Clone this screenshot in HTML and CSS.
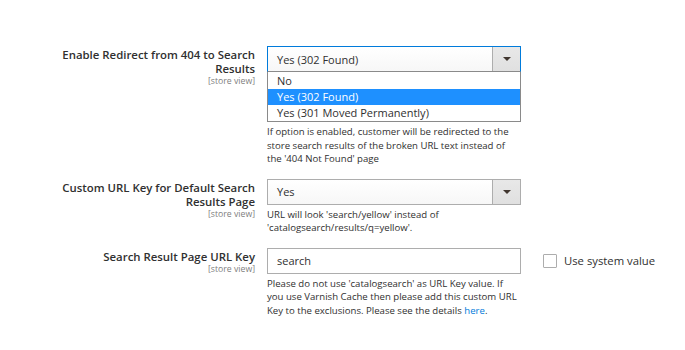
FILE: index.html
```html
<!DOCTYPE html>
<html lang="en">
<head>
    <meta charset="UTF-8">
    <title>Search Engine Optimization</title>
    <link rel="stylesheet" href="styles.css">
</head>
<body>
    <div class="fieldset">
        <div class="row">
            <div class="label">
                <span>Enable Redirect from 404 to Search Results</span>
                <span class="scope">[store view]</span>
            </div>
            <div class="control">
                <div class="select focused">
                    <span class="value">Yes (302 Found)</span>
                    <span class="arrow"></span>
                </div>
                <ul class="options">
                    <li>No</li>
                    <li class="active">Yes (302 Found)</li>
                    <li>Yes (301 Moved Permanently)</li>
                </ul>
                <p class="note">If option is enabled, customer will be redirected to the<br>store search results of the broken URL text instead of<br>the '404 Not Found' page</p>
            </div>
            <div class="extra"></div>
        </div>

        <div class="row">
            <div class="label">
                <span>Custom URL Key for Default Search Results Page</span>
                <span class="scope">[store view]</span>
            </div>
            <div class="control">
                <div class="select">
                    <span class="value">Yes</span>
                    <span class="arrow"></span>
                </div>
                <p class="note">URL will look 'search/yellow' instead of<br>'catalogsearch/results/q=yellow'.</p>
            </div>
            <div class="extra"></div>
        </div>

        <div class="row">
            <div class="label">
                <span>Search Result Page URL Key</span>
                <span class="scope">[store view]</span>
            </div>
            <div class="control">
                <input type="text" class="text" value="search">
                <p class="note">Please do not use 'catalogsearch' as URL Key value. If<br>you use Varnish Cache then please add this custom URL<br>Key to the exclusions. Please see the details <a href="#">here</a>.</p>
            </div>
            <div class="extra">
                <label class="check"><span class="box"></span>Use system value</label>
            </div>
        </div>
    </div>
</body>
</html>
```

FILE: styles.css
```css
body {
    margin: 0;
    background: #fff;
    font-family: 'Open Sans', sans-serif;
    color: #303030;
}

.fieldset {
    padding-top: 46px;
}

.row {
    display: grid;
    grid-template-columns: 255px 254px auto;
    column-gap: 12px;
    margin-bottom: 13px;
}

.label {
    box-sizing: border-box;
    padding: 2px 0 0 58px;
    text-align: right;
    font-size: 11.4px;
    font-weight: 600;
    line-height: 14px;
}

.label .scope {
    display: block;
    font-size: 8.7px;
    font-weight: 400;
    line-height: 11px;
    color: #808080;
}

.select {
    display: flex;
    align-items: center;
    height: 24px;
    border: 1px solid #adadad;
    background: linear-gradient(#fff, #f7f7f7);
}

.select.focused {
    border-color: #007bdb;
    border-bottom-color: #8a8a8a;
}

.select .value {
    flex: 1;
    padding-left: 9px;
    font-size: 11px;
}

.select .arrow {
    width: 27px;
    height: 100%;
    border-left: 1px solid #adadad;
    background: linear-gradient(#e8e8e8, #e0e0e0);
    display: flex;
    align-items: center;
    justify-content: center;
}

.select .arrow::after {
    content: "";
    border-left: 4px solid transparent;
    border-right: 4px solid transparent;
    border-top: 4px solid #41362f;
}

.options {
    list-style: none;
    margin: 0;
    padding: 1px 0 0;
    border: 1px solid #8a8a8a;
    border-top: none;
}

.options li {
    height: 16px;
    line-height: 16px;
    padding-left: 9px;
    font-size: 11px;
}

.options li.active {
    background: #1e90ff;
    color: #fff;
}

.note {
    margin: 3px 0 0;
    font-size: 9.6px;
    line-height: 13.5px;
    white-space: nowrap;
}

.note a {
    color: #007bdb;
    text-decoration: none;
}

.text {
    display: block;
    box-sizing: border-box;
    width: 100%;
    height: 26px;
    margin: 0;
    padding: 0 9px;
    border: 1px solid #adadad;
    border-radius: 0;
    font-family: 'Open Sans', sans-serif;
    font-size: 11px;
    color: #303030;
}

.extra {
    padding-left: 10px;
}

.check {
    display: flex;
    align-items: center;
    gap: 7px;
    height: 26px;
    font-size: 11.3px;
}

.check .box {
    width: 12px;
    height: 12px;
    border: 1px solid #adadad;
    border-radius: 1px;
    background: #fff;
}
```
